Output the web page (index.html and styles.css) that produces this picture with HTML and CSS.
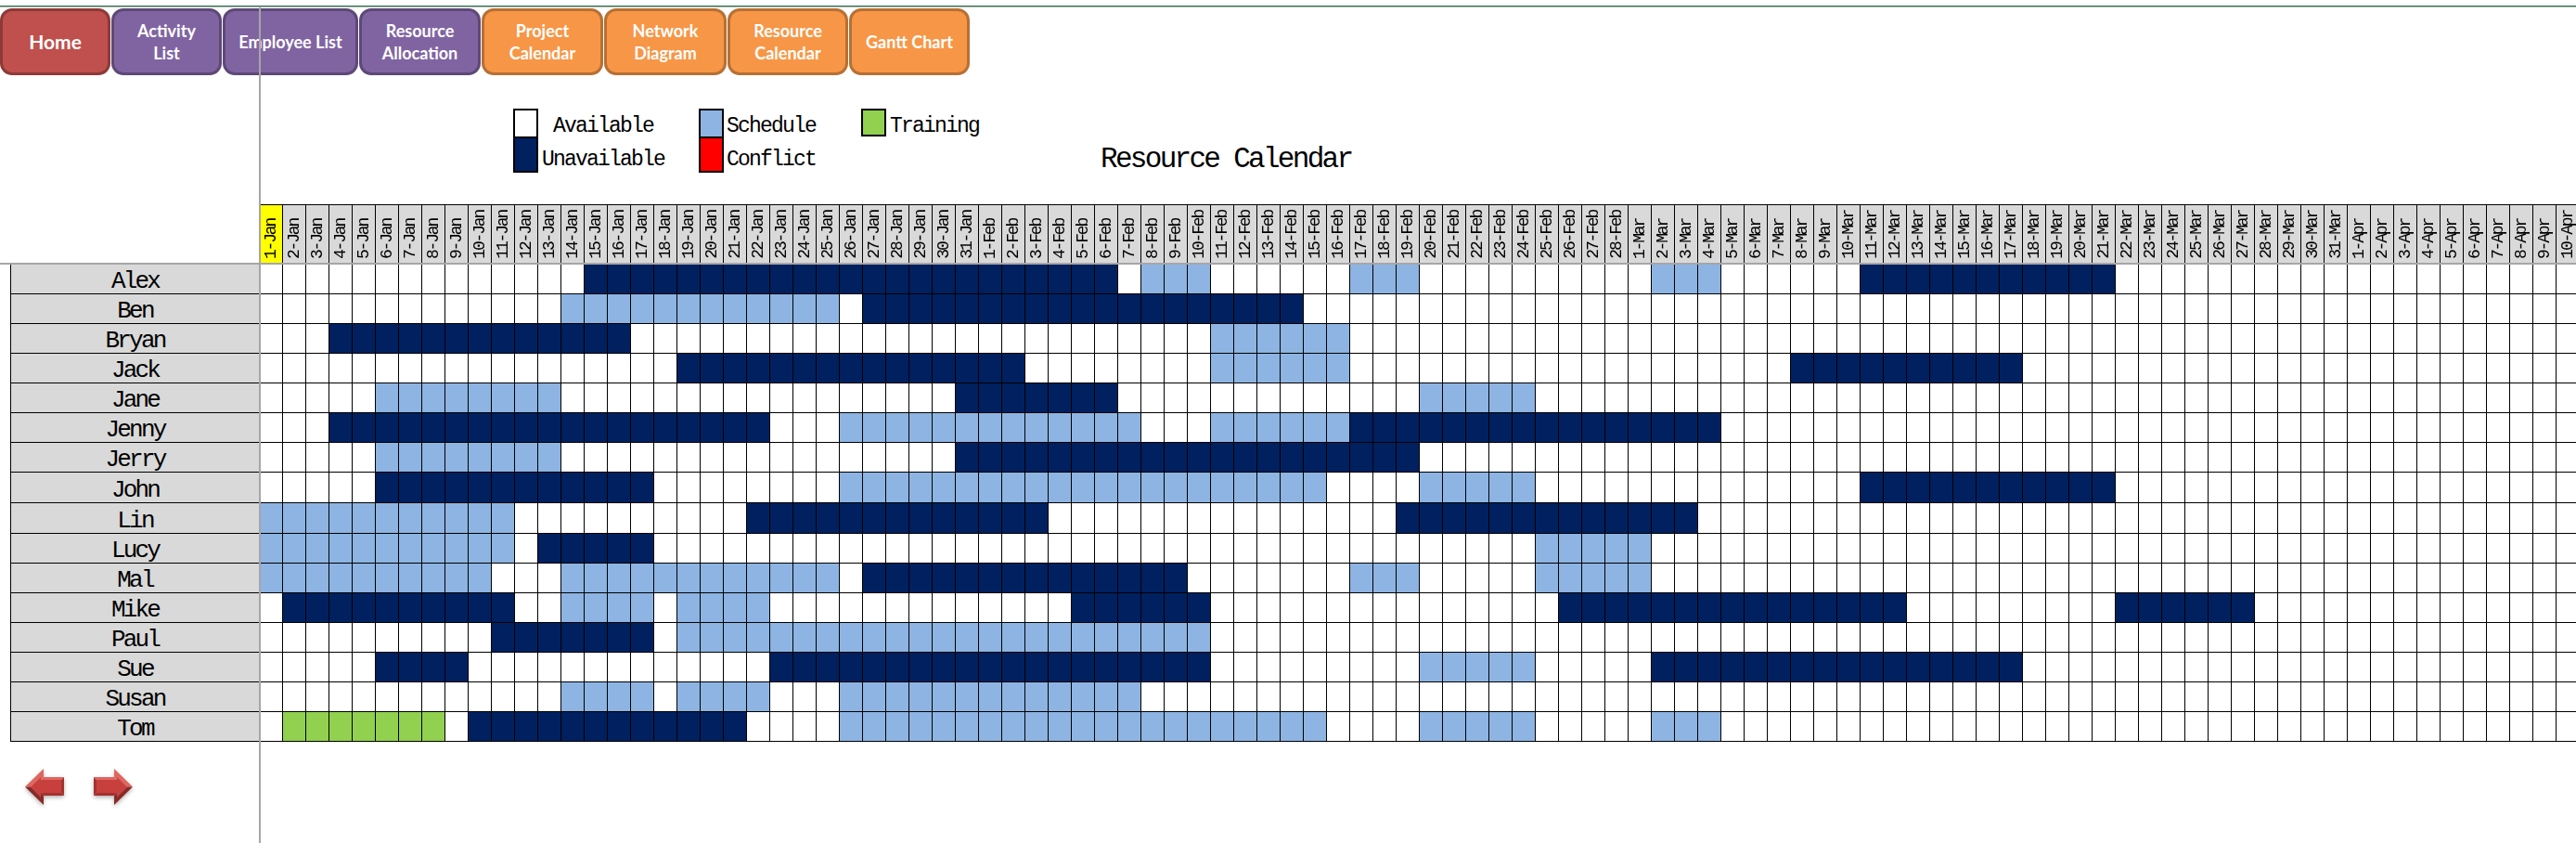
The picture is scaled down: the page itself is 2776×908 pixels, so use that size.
FILE: index.html
```html
<!DOCTYPE html>
<html lang="en">
<head>
  <meta charset="UTF-8" />
  <title>Resource Calendar</title>
  <link rel="stylesheet" href="styles.css">
</head>
<body>

  <div class="top-line"></div>

  <nav class="ribbon">
    <a class="btn btn-red btn-home" href="#">Home</a>
    <a class="btn btn-purple btn-activity" href="#">Activity<br>List</a>
    <a class="btn btn-purple btn-employee" href="#">Employee List</a>
    <a class="btn btn-purple btn-allocation" href="#">Resource<br>Allocation</a>
    <a class="btn btn-orange btn-project" href="#">Project<br>Calendar</a>
    <a class="btn btn-orange btn-network" href="#">Network<br>Diagram</a>
    <a class="btn btn-orange btn-rescal" href="#">Resource<br>Calendar</a>
    <a class="btn btn-orange btn-gantt" href="#">Gantt Chart</a>
  </nav>

  <section class="heading">
    <div class="legend">
      <span class="swatch sw-free"></span>
      <span class="legend-label label-wide">Available</span>
      <span class="swatch sw-sched"></span>
      <span class="legend-label label-sched">Schedule</span>
      <span class="swatch sw-train"></span>
      <span class="legend-label">Training</span>
      <span class="swatch sw-busy"></span>
      <span class="legend-label label-wide label-low">Unavailable</span>
      <span class="swatch sw-conflict"></span>
      <span class="legend-label label-sched label-low">Conflict</span>
    </div>
    <h1 class="title">Resource Calendar</h1>
  </section>

  <!-- Rows are filled in by calendar.js -->
  <table class="calendar" id="calendar">
    <thead><tr id="calendarHead"></tr></thead>
    <tbody id="calendarBody"></tbody>
  </table>

  <div class="arrows">
    <svg class="arrow" viewBox="0 0 42 39" width="42" height="39">
      <polygon class="face" points="6,19.5 17,8.5 17,12 39,12 39,26 17,26 17,30.5"/>
      <polygon class="lit" points="0,19.5 20,0 20,9 17,12 17,8.5 6,19.5"/>
      <polygon class="lit" points="20,9 42,9 39,12 17,12"/>
      <polygon class="shade" points="42,9 42,29 39,26 39,12"/>
      <polygon class="shade" points="20,29 42,29 39,26 17,26"/>
      <polygon class="dark" points="0,19.5 6,19.5 17,30.5 17,26 20,29 20,39"/>
    </svg>
    <svg class="arrow arrow-flip" viewBox="0 0 42 39" width="42" height="39">
      <polygon class="face" points="6,19.5 17,8.5 17,12 39,12 39,26 17,26 17,30.5"/>
      <polygon class="lit" points="0,19.5 20,0 20,9 17,12 17,8.5 6,19.5"/>
      <polygon class="lit" points="20,9 42,9 39,12 17,12"/>
      <polygon class="shade" points="42,9 42,29 39,26 39,12"/>
      <polygon class="shade" points="20,29 42,29 39,26 17,26"/>
      <polygon class="dark" points="0,19.5 6,19.5 17,30.5 17,26 20,29 20,39"/>
    </svg>
  </div>

  <!-- Frozen pane lines -->
  <div class="freeze-col"></div>
  <div class="freeze-row"></div>

  <script src="calendar.js"></script>
</body>
</html>
```

FILE: styles.css
```css
body {
  margin: 0;
  width: 2776px;
  height: 908px;
  position: relative;
  overflow: hidden;
  background-color: white;
  color: black;
  font-family: "Liberation Mono", monospace;
}

.top-line {
  margin-top: 6px;
  height: 1px;
  background-color: #217346;
  border-bottom: 1px solid #b5b5b5;
}

/* Buttons */
.ribbon {
  display: flex;
  gap: 1px;
  height: 72px;
  margin-top: 1px;
}
.btn {
  box-sizing: border-box;
  display: flex;
  align-items: center;
  justify-content: center;
  text-align: center;
  color: white;
  text-decoration: none;
  font-family: Lato, sans-serif;
  font-weight: bold;
  font-size: 18px;
  line-height: 24px;
  border: 3px solid;
  border-radius: 13px;
}
.btn-red { background-color: #c0504d; border-color: #8c3a38; }
.btn-purple { background-color: #8064a2; border-color: #5d4977; }
.btn-orange { background-color: #f79646; border-color: #b67034; }
.btn-home { width: 119px; font-size: 21px; }
.btn-activity { width: 119px; }
.btn-employee { width: 146px; }
.btn-allocation { width: 131px; }
.btn-project { width: 131px; }
.btn-network { width: 132px; }
.btn-rescal { width: 130px; }
.btn-gantt { width: 130px; }

/* Legend and title */
.heading {
  display: flex;
  height: 139px;
  padding-left: 553px;
}
.legend {
  display: grid;
  grid-template-columns: 27px 173px 27px 148px 27px auto;
  grid-template-rows: 30px 39px;
  margin-top: 36px;
  height: 69px;
  font-size: 23px;
  letter-spacing: -1.8px;
}
.swatch {
  border: 2px solid black;
}
.sw-free { background-color: white; border-bottom: 0; }
.sw-busy { background-color: #002060; }
.sw-sched { background-color: #8db4e2; border-bottom: 0; }
.sw-conflict { background-color: #ff0000; }
.sw-train { background-color: #92d050; }
.legend-label {
  padding-left: 4px;
  line-height: 38px;
  white-space: nowrap;
}
.label-wide {
  padding-left: 3px;
  width: 134px;
  text-align: center;
}
.label-sched {
  padding-left: 3px;
}
.label-low {
  line-height: 50px;
}
.title {
  margin: 71px 0 0 131px;
  font-size: 31px;
  font-weight: normal;
  letter-spacing: -2.7px;
  line-height: 40px;
  white-space: nowrap;
}

/* Calendar table */
.calendar {
  table-layout: fixed;
  width: 2768px;
  margin-left: 11px;
  border-collapse: collapse;
}
.calendar td,
.calendar th {
  box-sizing: border-box;
  padding: 0;
  border: 1px solid black;
  font-weight: normal;
}
.calendar .corner {
  width: 268px;
  border: 0;
  border-bottom: 1px solid black;
}
.day {
  width: 25px;
  height: 64px;
  background-color: #d9d9d9;
  vertical-align: bottom;
}
.day-first { background-color: #ffff00; }
.day-label {
  display: block;
  writing-mode: vertical-rl;
  transform: rotate(180deg);
  padding-top: 5px;
  margin: 0 auto;
  font-size: 18px;
  letter-spacing: -2.2px;
  line-height: 24px;
  white-space: nowrap;
}
.person {
  height: 32px;
  background-color: #d9d9d9;
  text-align: center;
  font-size: 26px;
  letter-spacing: -2.8px;
  line-height: 26px;
  overflow: hidden;
}
.calendar .person { padding-top: 5px; }
.row-first .person { height: 31px; }
.row-tall .person { height: 33px; }
.busy { background-color: #002060; }
.sched { background-color: #8db4e2; }
.train { background-color: #92d050; }

/* Arrows */
.arrows {
  display: flex;
  gap: 32px;
  margin: 29px 0 0 27px;
}
.arrow { filter: drop-shadow(0 2px 2px rgba(0, 0, 0, 0.3)); }
.arrow-flip { transform: scaleX(-1); }
.face { fill: #c8403d; }
.lit { fill: #e0655f; }
.shade { fill: #a33230; }
.dark { fill: #8a2927; }

/* Frozen panes */
.freeze-col {
  position: absolute;
  left: 279px;
  top: 8px;
  bottom: 0;
  width: 2px;
  background-color: #a6a6a6;
}
.freeze-row {
  position: absolute;
  left: 0;
  right: 0;
  top: 283px;
  height: 2px;
  background-color: #a6a6a6;
}
```

FILE: calendar.js
```js
const MONTHS = [["Jan", 31], ["Feb", 28], ["Mar", 31], ["Apr", 30]];
const DAY_COUNT = 100;

// who is doing what, as ranges of dates
const PEOPLE = [
  ["Alex", "busy 15-Jan 6-Feb", "sched 8-Feb 10-Feb", "sched 17-Feb 19-Feb", "sched 2-Mar 4-Mar", "busy 11-Mar 21-Mar"],
  ["Ben", "sched 14-Jan 25-Jan", "busy 27-Jan 14-Feb"],
  ["Bryan", "busy 4-Jan 16-Jan", "sched 11-Feb 16-Feb"],
  ["Jack", "busy 19-Jan 2-Feb", "sched 11-Feb 16-Feb", "busy 8-Mar 17-Mar"],
  ["Jane", "sched 6-Jan 13-Jan", "busy 31-Jan 6-Feb", "sched 20-Feb 24-Feb"],
  ["Jenny", "busy 4-Jan 22-Jan", "sched 26-Jan 7-Feb", "sched 11-Feb 16-Feb", "busy 17-Feb 4-Mar"],
  ["Jerry", "sched 6-Jan 13-Jan", "busy 31-Jan 19-Feb"],
  ["John", "busy 6-Jan 17-Jan", "sched 26-Jan 15-Feb", "sched 20-Feb 24-Feb", "busy 11-Mar 21-Mar"],
  ["Lin", "sched 1-Jan 11-Jan", "busy 22-Jan 3-Feb", "busy 19-Feb 3-Mar"],
  ["Lucy", "sched 1-Jan 11-Jan", "busy 13-Jan 17-Jan", "sched 25-Feb 1-Mar"],
  ["Mal", "sched 1-Jan 10-Jan", "sched 14-Jan 25-Jan", "busy 27-Jan 9-Feb", "sched 17-Feb 19-Feb", "sched 25-Feb 1-Mar"],
  ["Mike", "busy 2-Jan 11-Jan", "sched 14-Jan 17-Jan", "sched 19-Jan 22-Jan", "busy 5-Feb 10-Feb", "busy 26-Feb 12-Mar", "busy 22-Mar 27-Mar"],
  ["Paul", "busy 11-Jan 17-Jan", "sched 19-Jan 10-Feb"],
  ["Sue", "busy 6-Jan 9-Jan", "busy 23-Jan 10-Feb", "sched 20-Feb 24-Feb", "busy 2-Mar 17-Mar"],
  ["Susan", "sched 14-Jan 17-Jan", "sched 19-Jan 22-Jan", "sched 26-Jan 7-Feb"],
  ["Tom", "train 2-Jan 8-Jan", "busy 10-Jan 21-Jan", "sched 26-Jan 15-Feb", "sched 20-Feb 24-Feb", "sched 2-Mar 4-Mar"]
];

// list of the labels, 1-Jan first
const days = [];
MONTHS.forEach(([name, length]) => {
  for (let d = 1; d <= length && days.length < DAY_COUNT; d++) {
    days.push(d + "-" + name);
  }
});

const head = document.getElementById("calendarHead");
const corner = document.createElement("th");
corner.className = "corner";
head.appendChild(corner);

days.forEach((label, i) => {
  const th = document.createElement("th");
  th.className = i === 0 ? "day day-first" : "day";
  const span = document.createElement("span");
  span.className = "day-label";
  span.textContent = label;
  th.appendChild(span);
  head.appendChild(th);
});

const body = document.getElementById("calendarBody");
PEOPLE.forEach(([name, ...ranges], rowIndex) => {
  const row = document.createElement("tr");
  if (rowIndex === 0) row.className = "row-first";
  if (name === "John" || name === "Lin") row.className = "row-tall";

  const nameCell = document.createElement("td");
  nameCell.className = "person";
  nameCell.textContent = name;
  row.appendChild(nameCell);

  const kinds = new Array(DAY_COUNT).fill("");
  ranges.forEach((range) => {
    const [kind, from, to] = range.split(" ");
    for (let i = days.indexOf(from); i <= days.indexOf(to); i++) {
      kinds[i] = kind;
    }
  });

  kinds.forEach((kind) => {
    const cell = document.createElement("td");
    cell.className = kind;
    row.appendChild(cell);
  });
  body.appendChild(row);
});
```
